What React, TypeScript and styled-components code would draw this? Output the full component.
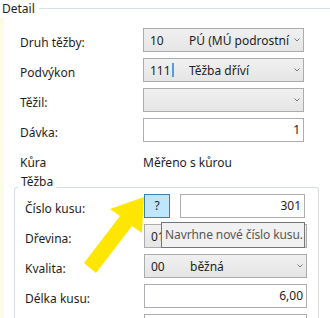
import React from "react";
import styled, { createGlobalStyle } from "styled-components";

const GlobalStyle = createGlobalStyle`
    body{
        margin : 0;
        background : #ffffff;
        font-family : "Noto Sans", "Open Sans", sans-serif;
        font-size : 12px;
        color : #1e1e1e;
    }
`;

const Page = styled.div`
    position : relative;
    width : 330px;
    height : 318px;
    overflow : hidden;
    background : #ffffff;
`;

const Header = styled.div`
    display : flex;
    align-items : center;
    height : 17px;
    padding-left : 2px;
    line-height : 16px;

    .rule{
        flex : 1;
        height : 1px;
        margin-left : 4px;
        background : #d5dfe5;
    }
`;

const Body = styled.div`
    display : flex;
    height : 301px;
`;

const Strip = styled.div`
    width : 4px;
    background : #fbfbe6;
    flex-shrink : 0;
`;

const Content = styled.div`
    flex : 1;
    min-width : 0;
    padding-top : 11px;
`;

const Form = styled.div<{ $label : number }>`
    display : grid;
    grid-template-columns : ${p => p.$label}px minmax(0, 1fr);
    grid-auto-rows : 24px;
    row-gap : 6px;
`;

const Label = styled.div`
    padding-top : 7px;
    line-height : 16px;
    white-space : nowrap;
`;

const Combo = styled.div`
    display : flex;
    align-items : center;
    box-sizing : border-box;
    height : 24px;
    padding-left : 6px;
    border : 1px solid #acacac;
    background : linear-gradient(#f0f0f0, #e5e5e5);
    white-space : nowrap;
    min-width : 0;

    .code{
        display : flex;
        align-items : center;
        width : 39px;
        flex-shrink : 0;
    }
    .name{
        flex : 1;
        min-width : 0;
        overflow : hidden;
    }
    .caret{
        width : 2px;
        height : 14px;
        margin-left : 1px;
        background : #5a9ad8;
    }
    svg{
        flex-shrink : 0;
        margin : 0 3px 0 3px;
    }
`;

const Input = styled.div`
    box-sizing : border-box;
    height : 24px;
    padding-right : 3px;
    border : 1px solid #abadb3;
    background : #ffffff;
    text-align : right;
    line-height : 22px;
    flex : 1;
    min-width : 0;
`;

const Plain = styled.div`
    line-height : 16px;
`;

const Group = styled.fieldset`
    margin : 9px 11px 0 10px;
    padding : 0 11px 0 10px;
    min-width : 0;
    border : 1px solid #d5dfe5;
    border-right-color : #dcdcdc;
    border-radius : 3px;
    height : 200px;

    legend{
        margin-left : -7px;
        padding : 0 3px;
        height : 14px;
        line-height : 14px;
        transform : translateY(-5px);
    }
`;

const Pair = styled.div`
    display : flex;
    gap : 10px;
    min-width : 0;
`;

const AskButton = styled.div`
    width : 26px;
    flex-shrink : 0;
    box-sizing : border-box;
    height : 24px;
    border : 1px solid #3c7fb1;
    background : #bee6fd;
    text-align : center;
    line-height : 22px;
`;

const Cell = styled.div`
    position : relative;
    min-width : 0;
`;

const Tooltip = styled.div`
    position : absolute;
    left : 17px;
    top : -2px;
    box-sizing : border-box;
    width : 144px;
    height : 26px;
    padding-left : 3px;
    border : 1px solid #767676;
    background : #f1f1f1;
    color : #575757;
    line-height : 24px;
    white-space : nowrap;
    letter-spacing : -0.1px;
`;

const Arrow = styled.svg`
    position : absolute;
    left : 0;
    top : 0;
    pointer-events : none;
`;

const Chevron = () => (
    <svg width="6" height="4" viewBox="0 0 6 4">
        <path d="M0.5 0.5 L3 3 L5.5 0.5" fill="none" stroke="#7a7a7a" strokeWidth="1" />
    </svg>
);

const ComboBox = ({ code, name, caret } : { code? : string; name? : string; caret? : boolean }) => (
    <Combo>
        <span className="code">{code}{caret && <span className="caret" />}</span>
        <span className="name">{name}</span>
        <Chevron />
    </Combo>
);

const App = () => {
    return (
        <Page>
            <GlobalStyle />
            <Header>
                <span>Detail</span>
                <span className="rule" />
            </Header>
            <Body>
                <Strip />
                <Content>
                    <Form $label={123} style={{ paddingLeft : 16, paddingRight : 26 }}>
                        <Label>Druh těžby:</Label>
                        <ComboBox code="10" name="PÚ (MÚ podrostní těžba)" />
                        <Label>Podvýkon</Label>
                        <ComboBox code="111" name="Těžba dříví" caret />
                        <Label>Těžil:</Label>
                        <ComboBox />
                        <Label>Dávka:</Label>
                        <Input>1</Input>
                    </Form>
                    <Form $label={123} style={{ paddingLeft : 16, marginTop : 13, gridAutoRows : 16 }}>
                        <Plain>Kůra</Plain>
                        <Plain>Měřeno s kůrou</Plain>
                    </Form>
                    <Group>
                        <legend>Těžba</legend>
                        <Form $label={119}>
                            <Label>Číslo kusu:</Label>
                            <Pair>
                                <AskButton>?</AskButton>
                                <Input style={{ marginRight : 2 }}>301</Input>
                            </Pair>
                            <Label>Dřevina:</Label>
                            <Cell>
                                <ComboBox code="01" name="smrk" />
                                <Tooltip>Navrhne nové číslo kusu.</Tooltip>
                            </Cell>
                            <Label>Kvalita:</Label>
                            <ComboBox code="00" name="běžná" />
                            <Label>Délka kusu:</Label>
                            <Input>6,00</Input>
                            <Label />
                            <Input />
                        </Form>
                    </Group>
                </Content>
            </Body>
            <Arrow width="330" height="318" viewBox="0 0 330 318">
                <polygon
                    points="84,263 120,216 110,209 144,197 142,233 132,226 96,273"
                    fill="#ffe600"
                />
            </Arrow>
        </Page>
    );
};

export default App;
